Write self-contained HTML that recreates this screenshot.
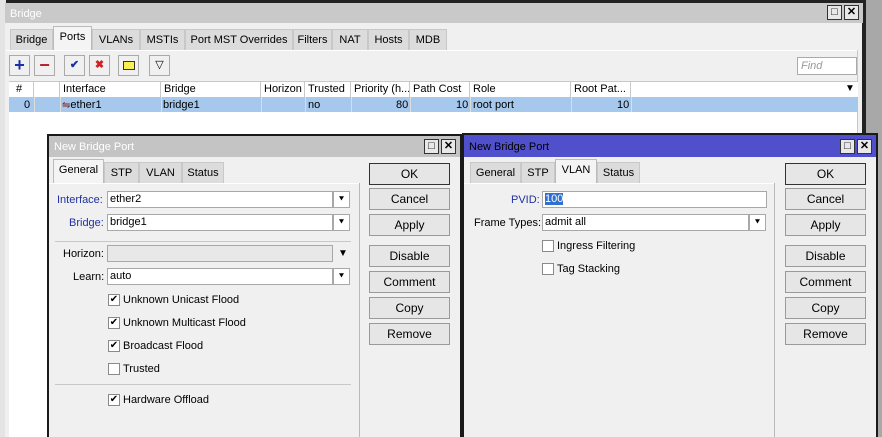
<!DOCTYPE html>
<html><head><meta charset="utf-8"><style>
*{box-sizing:border-box;margin:0;padding:0}
body{width:882px;height:437px;overflow:hidden;background:#a8a8a8;font-family:"Liberation Sans",Arial,sans-serif;font-size:11px;color:#000;position:relative}
.a{position:absolute}
.t{position:absolute;white-space:nowrap;line-height:14px}
.tab{position:absolute;background:#dcdcdc;border:1px solid #c8c8c8;border-bottom:none;text-align:center;line-height:20px;white-space:nowrap}
.tab.sel{background:#f4f4f4;border-color:#bbb}
.btn{position:absolute;background:#e6e6e6;border:1px solid #9a9a9a;text-align:center;line-height:20px;height:22px;font-size:12px}
.inp{position:absolute;background:#fff;border:1px solid #a8a8a8;height:17px;line-height:15px;padding-left:2px}
.dd{position:absolute;background:#fff;border:1px solid #a8a8a8;width:17px;height:17px;font-size:9px;text-align:center;line-height:15px}
.cb{position:absolute;width:12px;height:12px;border:1px solid #8a8a8a;background:#fff;font-size:10px;line-height:10px;text-align:center}
.tb{position:absolute;width:21px;height:21px;border:1px solid #aaa;background:#f0f0f0;text-align:center;line-height:19px;font-weight:bold}
.th{position:absolute;top:82px;height:15px;border-right:1px solid #c8c8c8;line-height:15px;padding-left:3px;overflow:hidden;white-space:nowrap}
.wb{position:absolute;width:15px;height:15px;border:1px solid #333;background:#e8e8e8;font-size:11px;line-height:13px;text-align:center;font-weight:bold}
</style></head><body>
<div class="a" style="left:0;top:0;width:866px;height:437px;background:#222"></div>
<div class="a" style="left:0;top:0;width:6px;height:437px;background:#e4e4e4"></div>
<div class="a" style="left:5px;top:3px;width:858px;height:20px;background:#c9c9c9"></div>
<div class="t" style="left:10px;top:7px;color:#fff">Bridge</div>
<div class="wb" style="left:827px;top:5px">□</div><div class="wb" style="left:844px;top:5px">✕</div>
<div class="a" style="left:5px;top:23px;width:857px;height:414px;background:#f0f0f0"></div>
<div class="tab" style="left:10px;top:29px;width:43px;height:22px">Bridge</div>
<div class="tab sel" style="left:53px;top:26px;width:39px;height:25px">Ports</div>
<div class="tab" style="left:92px;top:29px;width:48px;height:22px">VLANs</div>
<div class="tab" style="left:140px;top:29px;width:45px;height:22px">MSTIs</div>
<div class="tab" style="left:185px;top:29px;width:108px;height:22px">Port MST Overrides</div>
<div class="tab" style="left:293px;top:29px;width:39px;height:22px">Filters</div>
<div class="tab" style="left:332px;top:29px;width:36px;height:22px">NAT</div>
<div class="tab" style="left:368px;top:29px;width:41px;height:22px">Hosts</div>
<div class="tab" style="left:409px;top:29px;width:38px;height:22px">MDB</div>
<div class="a" style="left:6px;top:50px;width:852px;height:1px;background:#fff"></div>
<div class="a" style="left:857px;top:50px;width:1px;height:387px;background:#c8c8c8"></div>
<div class="tb" style="left:9px;top:55px;color:#1a2fa8;font-size:18px">+</div>
<div class="tb" style="left:34px;top:55px;color:#b0242c;font-size:18px">−</div>
<div class="tb" style="left:64px;top:55px;color:#1a2fa8">✔</div>
<div class="tb" style="left:89px;top:55px;color:#d02020">✖</div>
<div class="tb" style="left:118px;top:55px"><div class="a" style="left:4px;top:5px;width:12px;height:9px;background:#f8f050;border:1px solid #333"></div></div>
<div class="tb" style="left:149px;top:55px;font-weight:normal">▽</div>
<div class="a" style="left:797px;top:57px;width:60px;height:18px;background:#fff;border:1px solid #aaa;color:#999;font-style:italic;padding-left:3px;line-height:16px">Find</div>
<div class="a" style="left:9px;top:81px;width:849px;height:17px;background:#fff;border-top:1px solid #c8c8c8;border-bottom:1px solid #c8c8c8"></div>
<div class="th" style="left:10px;width:24px;padding-left:6px">#</div>
<div class="th" style="left:34px;width:26px"></div>
<div class="th" style="left:60px;width:101px">Interface</div>
<div class="th" style="left:161px;width:100px">Bridge</div>
<div class="th" style="left:261px;width:44px">Horizon</div>
<div class="th" style="left:305px;width:46px">Trusted</div>
<div class="th" style="left:351px;width:59px">Priority (h...</div>
<div class="th" style="left:410px;width:60px">Path Cost</div>
<div class="th" style="left:470px;width:101px">Role</div>
<div class="th" style="left:571px;width:60px">Root Pat...</div>
<div class="t" style="left:845px;top:82px;font-size:10px">▼</div>
<div class="a" style="left:9px;top:97px;width:849px;height:15px;background:#a6c8ec"></div>
<div class="t" style="left:24px;top:98px">0</div>
<div class="t" style="left:62px;top:98px"><span style="color:#802020;font-size:10px">⇋</span>ether1</div>
<div class="t" style="left:163px;top:98px">bridge1</div>
<div class="t" style="left:308px;top:98px">no</div>
<div class="t" style="left:396px;top:98px">80</div>
<div class="t" style="left:456px;top:98px">10</div>
<div class="t" style="left:473px;top:98px">root port</div>
<div class="t" style="left:617px;top:98px">10</div>
<div class="a" style="left:34px;top:97px;width:1px;height:15px;background:#ddd"></div>
<div class="a" style="left:60px;top:97px;width:1px;height:15px;background:#ddd"></div>
<div class="a" style="left:161px;top:97px;width:1px;height:15px;background:#ddd"></div>
<div class="a" style="left:261px;top:97px;width:1px;height:15px;background:#ddd"></div>
<div class="a" style="left:305px;top:97px;width:1px;height:15px;background:#ddd"></div>
<div class="a" style="left:351px;top:97px;width:1px;height:15px;background:#ddd"></div>
<div class="a" style="left:410px;top:97px;width:1px;height:15px;background:#ddd"></div>
<div class="a" style="left:470px;top:97px;width:1px;height:15px;background:#ddd"></div>
<div class="a" style="left:571px;top:97px;width:1px;height:15px;background:#ddd"></div>
<div class="a" style="left:631px;top:97px;width:1px;height:15px;background:#ddd"></div>
<div class="a" style="left:9px;top:112px;width:848px;height:325px;background:#fff"></div>

<div class="a" style="left:47px;top:134px;width:415px;height:303px;background:#1a1a1a"></div>
<div class="a" style="left:49px;top:136px;width:411px;height:21px;background:#c4c4c4"></div>
<div class="t" style="left:54px;top:140px;color:#fff">New Bridge Port</div>
<div class="wb" style="left:424px;top:139px">□</div><div class="wb" style="left:441px;top:139px">✕</div>
<div class="a" style="left:49px;top:157px;width:411px;height:280px;background:#f0f0f0"></div>
<div class="tab sel" style="left:53px;top:159px;width:51px;height:24px">General</div>
<div class="tab" style="left:104px;top:162px;width:35px;height:21px">STP</div>
<div class="tab" style="left:139px;top:162px;width:43px;height:21px">VLAN</div>
<div class="tab" style="left:182px;top:162px;width:42px;height:21px">Status</div>
<div class="a" style="left:49px;top:183px;width:311px;height:1px;background:#fff"></div>
<div class="a" style="left:359px;top:183px;width:1px;height:254px;background:#b8b8b8"></div>
<div class="t" style="left:57px;top:193px;color:#2030a0">Interface:</div>
<div class="inp" style="left:107px;top:191px;width:226px">ether2</div><div class="dd" style="left:333px;top:191px">⯆</div>
<div class="t" style="left:69px;top:216px;color:#2030a0">Bridge:</div>
<div class="inp" style="left:107px;top:214px;width:226px">bridge1</div><div class="dd" style="left:333px;top:214px">⯆</div>
<div class="a" style="left:55px;top:241px;width:296px;height:1px;background:#c8c8c8"></div>
<div class="t" style="left:63px;top:247px">Horizon:</div>
<div class="inp" style="left:107px;top:245px;width:226px;background:#e8e8e8"></div>
<div class="t" style="left:338px;top:247px;font-size:10px">▼</div>
<div class="t" style="left:73px;top:270px">Learn:</div>
<div class="inp" style="left:107px;top:268px;width:226px">auto</div><div class="dd" style="left:333px;top:268px">⯆</div>
<div class="cb" style="left:108px;top:294px">✔</div><div class="t" style="left:123px;top:293px">Unknown Unicast Flood</div>
<div class="cb" style="left:108px;top:317px">✔</div><div class="t" style="left:123px;top:316px">Unknown Multicast Flood</div>
<div class="cb" style="left:108px;top:340px">✔</div><div class="t" style="left:123px;top:339px">Broadcast Flood</div>
<div class="cb" style="left:108px;top:363px"></div><div class="t" style="left:123px;top:362px">Trusted</div>
<div class="a" style="left:55px;top:384px;width:296px;height:1px;background:#c8c8c8"></div>
<div class="cb" style="left:108px;top:394px">✔</div><div class="t" style="left:123px;top:393px">Hardware Offload</div>
<div class="btn" style="left:369px;top:163px;width:81px;border-color:#333">OK</div>
<div class="btn" style="left:369px;top:188px;width:81px">Cancel</div>
<div class="btn" style="left:369px;top:214px;width:81px">Apply</div>
<div class="btn" style="left:369px;top:245px;width:81px">Disable</div>
<div class="btn" style="left:369px;top:271px;width:81px">Comment</div>
<div class="btn" style="left:369px;top:297px;width:81px">Copy</div>
<div class="btn" style="left:369px;top:323px;width:81px">Remove</div>

<div class="a" style="left:462px;top:133px;width:416px;height:304px;background:#1a1a1a"></div>
<div class="a" style="left:464px;top:135px;width:412px;height:22px;background:#5050cc"></div>
<div class="t" style="left:469px;top:140px;color:#000">New Bridge Port</div>
<div class="wb" style="left:840px;top:139px">□</div><div class="wb" style="left:857px;top:139px">✕</div>
<div class="a" style="left:464px;top:157px;width:412px;height:280px;background:#f0f0f0"></div>
<div class="tab" style="left:470px;top:162px;width:51px;height:21px">General</div>
<div class="tab" style="left:521px;top:162px;width:34px;height:21px">STP</div>
<div class="tab sel" style="left:555px;top:159px;width:42px;height:24px">VLAN</div>
<div class="tab" style="left:597px;top:162px;width:43px;height:21px">Status</div>
<div class="a" style="left:464px;top:183px;width:311px;height:1px;background:#fff"></div>
<div class="a" style="left:774px;top:183px;width:1px;height:254px;background:#b8b8b8"></div>
<div class="t" style="left:511px;top:193px;color:#2030a0">PVID:</div>
<div class="inp" style="left:542px;top:191px;width:225px"><span style="background:#3070d0;color:#fff">100</span></div>
<div class="t" style="left:474px;top:216px">Frame Types:</div>
<div class="inp" style="left:542px;top:214px;width:207px">admit all</div><div class="dd" style="left:749px;top:214px">⯆</div>
<div class="cb" style="left:542px;top:240px"></div><div class="t" style="left:557px;top:239px">Ingress Filtering</div>
<div class="cb" style="left:542px;top:263px"></div><div class="t" style="left:557px;top:262px">Tag Stacking</div>
<div class="btn" style="left:785px;top:163px;width:81px;border-color:#333">OK</div>
<div class="btn" style="left:785px;top:188px;width:81px">Cancel</div>
<div class="btn" style="left:785px;top:214px;width:81px">Apply</div>
<div class="btn" style="left:785px;top:245px;width:81px">Disable</div>
<div class="btn" style="left:785px;top:271px;width:81px">Comment</div>
<div class="btn" style="left:785px;top:297px;width:81px">Copy</div>
<div class="btn" style="left:785px;top:323px;width:81px">Remove</div>
</body></html>
